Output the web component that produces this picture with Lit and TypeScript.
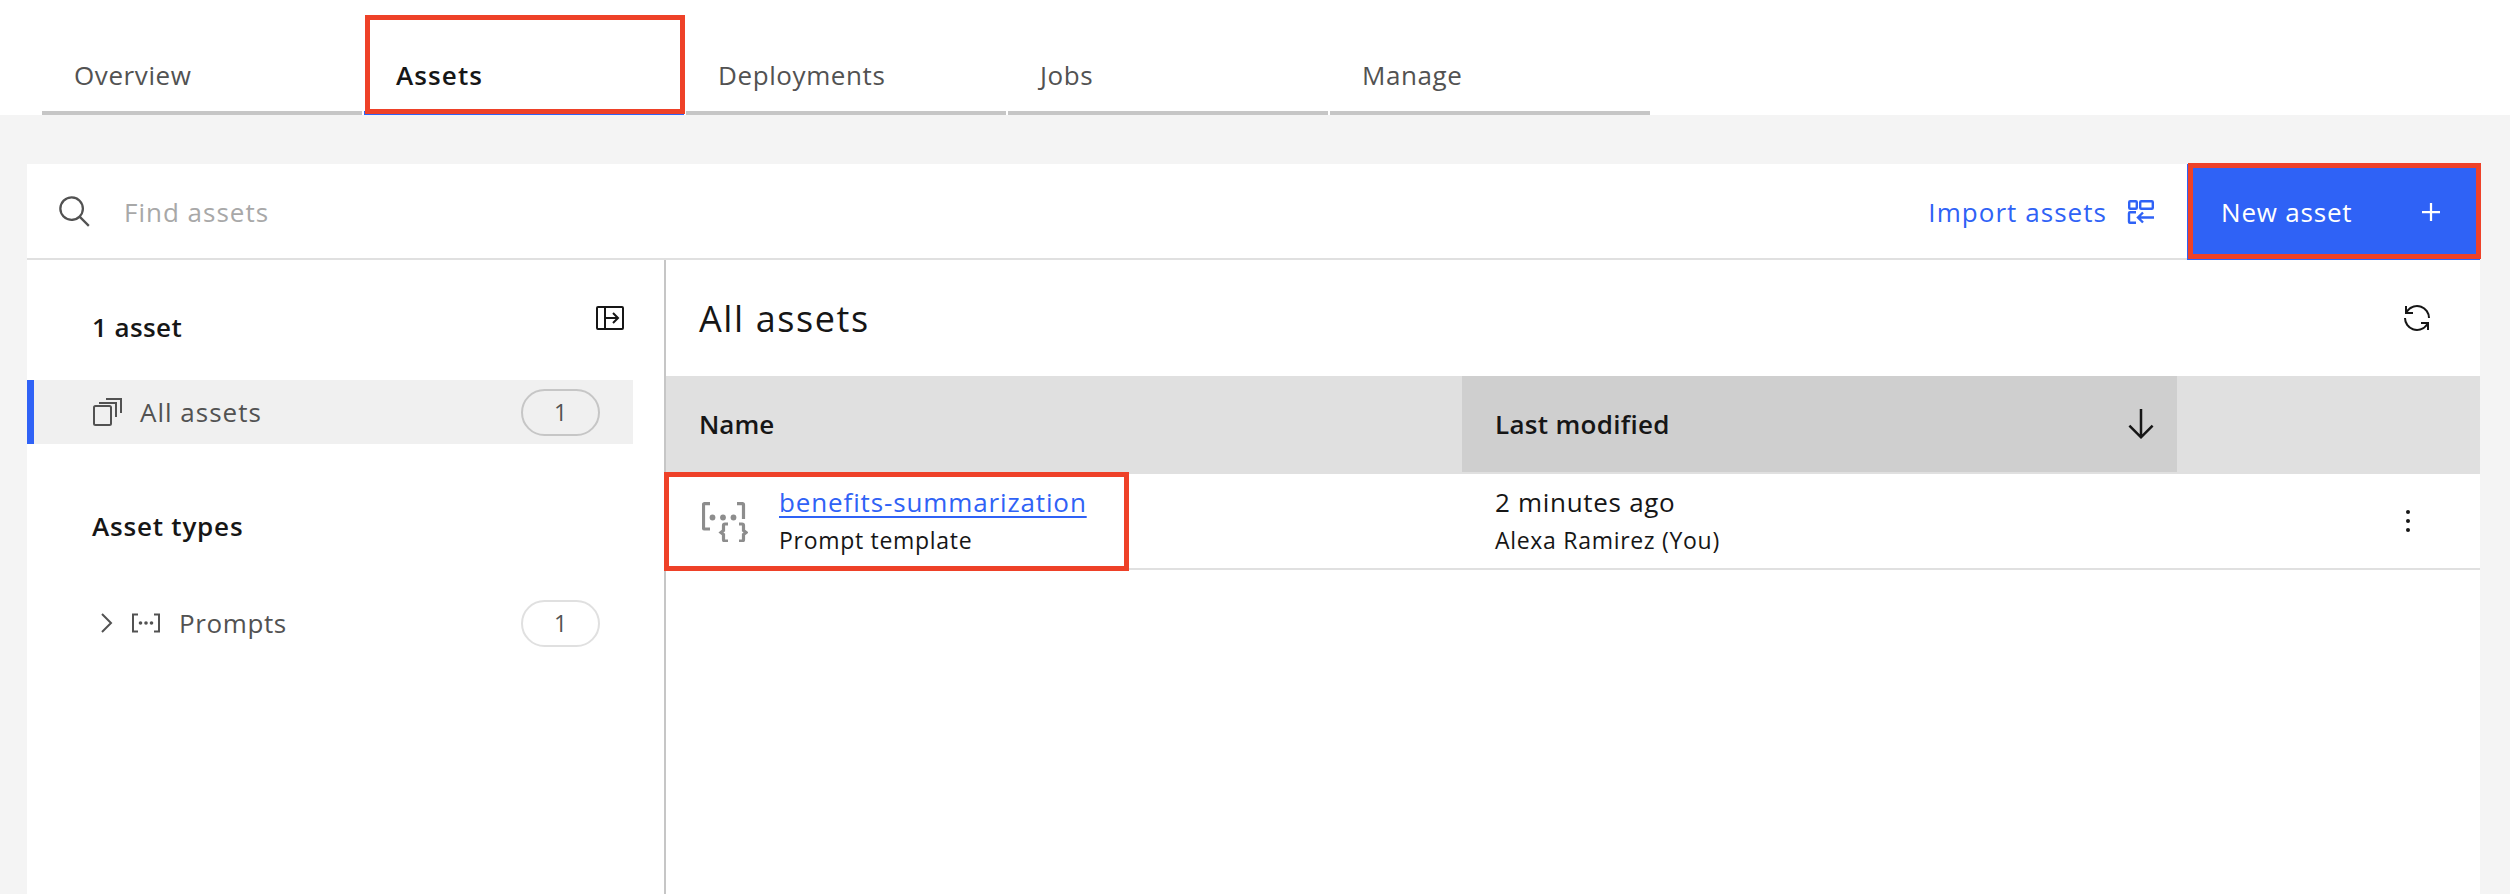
import { LitElement, html, css, svg } from "lit";
import { customElement, property } from "lit/decorators.js";

const icon = (size: number, body: unknown, box = "0 0 32 32") => html`
  <svg width=${size} height=${size} viewBox=${box} fill="currentColor">${body}</svg>
`;

const searchIcon = svg`<path d="M29 27.59l-7.55-7.55a11.02 11.02 0 1 0-1.41 1.41L27.59 29zM4 13a9 9 0 1 1 9 9 9.01 9.01 0 0 1-9-9z" />`;
const addIcon = svg`<path d="M17 15V8h-2v7H8v2h7v7h2v-7h7v-2z" />`;
const renewIcon = svg`<path d="M12 10H6.78A11 11 0 0 1 27 16h2A13 13 0 0 0 6 7.68V4H4v8h8zM20 22h5.22A11 11 0 0 1 5 16H3a13 13 0 0 0 23 8.32V28h2v-8h-8z" />`;
const arrowDown = svg`<path d="M24.59 16.59L17 24.17V4h-2v20.17l-7.59-7.58L6 18l10 10 10-10-1.41-1.41z" />`;
const overflowIcon = svg`<circle cx="16" cy="8" r="1.8" /><circle cx="16" cy="16" r="1.8" /><circle cx="16" cy="24" r="1.8" />`;

const importIcon = html`
  <svg width="28" height="24" viewBox="0 0 28 24" fill="none" stroke="currentColor" stroke-width="2.4">
    <rect x="2.2" y="1.2" width="7.6" height="7.6" rx="1" />
    <rect x="13.2" y="1.2" width="12.6" height="7.6" rx="1" />
    <path d="M9 12.2H3a1 1 0 0 0-1 1V21.8a1 1 0 0 0 1 1h6" />
    <path d="M27 17.5H11M16 12.5l-5 5 5 5" />
  </svg>
`;
const collapseIcon = html`
  <svg width="30" height="26" viewBox="0 0 30 26" fill="none" stroke="currentColor" stroke-width="2">
    <rect x="2" y="2" width="26" height="22" rx="1" />
    <path d="M10 2v22M10 13h13M18 8l5 5-5 5" />
  </svg>
`;
const stackIcon = html`
  <svg width="30" height="30" viewBox="0 0 30 30" fill="none" stroke="currentColor" stroke-width="2">
    <rect x="2" y="9" width="17" height="19" rx="1.5" />
    <path d="M7 6h17v14M14 2h15v14" />
  </svg>
`;
const chevronIcon = html`
  <svg width="16" height="20" viewBox="0 0 16 20" fill="none" stroke="currentColor" stroke-width="2">
    <path d="M3 1l9 9-9 9" />
  </svg>
`;
const promptsIcon = html`
  <svg width="30" height="20" viewBox="0 0 30 20" fill="none" stroke="currentColor" stroke-width="2">
    <path d="M7 1.5H2v17h5M23 1.5h5v17h-5" />
    <g fill="currentColor" stroke="none">
      <circle cx="9.5" cy="10" r="1.8" /><circle cx="15" cy="10" r="1.8" /><circle cx="20.5" cy="10" r="1.8" />
    </g>
  </svg>
`;
const templateIcon = html`
  <svg width="46" height="40" viewBox="0 0 46 40" fill="none" stroke="currentColor" stroke-width="3.2">
    <path d="M8 1.6H2.5a1 1 0 0 0-1 1V26a1 1 0 0 0 1 1H8M35 1.6h5.5a1 1 0 0 1 1 1V17" />
    <path d="M26 22h-3a1.5 1.5 0 0 0-1.5 1.5v5L19 30.5l2.5 2v5A1.5 1.5 0 0 0 23 39h3" />
    <path d="M37 22h3a1.5 1.5 0 0 1 1.5 1.5v5l2.5 2-2.5 2v5A1.5 1.5 0 0 1 40 39h-3" />
    <g fill="currentColor" stroke="none">
      <circle cx="10.5" cy="15.5" r="2.9" /><circle cx="21" cy="15.5" r="2.9" /><circle cx="31.5" cy="15.5" r="2.9" />
    </g>
  </svg>
`;

@customElement("count-tag")
export class CountTag extends LitElement {
  @property({ type: Boolean }) strong = false;

  static styles = css`
    .c-tag {
      display: flex;
      align-items: center;
      justify-content: center;
      box-sizing: border-box;
      width: 79px;
      height: 47px;
      border: 2px solid #e0e0e0;
      border-radius: 24px;
      font-size: 23px;
      color: #525252;
    }

    .c-tag--strong {
      border-color: #c6c6c6;
    }
  `;

  render() {
    return html`<div class="c-tag ${this.strong ? "c-tag--strong" : ""}">1</div>`;
  }
}

@customElement("app-root")
export class AppRoot extends LitElement {
  static styles = css`
    :host {
      display: block;
      height: 894px;
      overflow: hidden;
      background: #f4f4f4;
      font-family: "Open Sans", "Liberation Sans", sans-serif;
      color: #161616;
    }

    .c-tabs {
      display: flex;
      gap: 2px;
      height: 115px;
      padding-left: 42px;
      background: #fff;
    }

    .c-tabs__tab {
      position: relative;
      box-sizing: border-box;
      display: flex;
      align-items: center;
      width: 320px;
      padding: 39px 0 0 32px;
      border-bottom: 4px solid #c6c6c6;
      font-size: 26px;
      letter-spacing: 0.6px;
      color: #525252;
    }

    .c-tabs__tab--active {
      border-bottom-color: #2f62f6;
      font-weight: 600;
      letter-spacing: 1.1px;
      color: #161616;
    }

    .c-mark {
      position: absolute;
      box-sizing: border-box;
      border: 5px solid #ee4128;
      pointer-events: none;
    }

    .c-mark--tab {
      top: 15px;
      left: 1px;
      right: -1px;
      bottom: -3px;
    }

    .c-mark--button {
      top: -1px;
      left: 1px;
      right: -1px;
      bottom: 1px;
    }

    .c-mark--row {
      top: -2px;
      left: -2px;
      width: 465px;
      height: 99px;
    }

    .c-panel {
      margin: 49px 30px 0 27px;
      background: #fff;
      height: 730px;
    }

    .c-bar {
      display: flex;
      align-items: center;
      height: 96px;
      box-shadow: inset 0 -2px 0 #e0e0e0;
    }

    .c-bar__search {
      display: flex;
      align-items: center;
      gap: 31px;
      flex: 1;
      padding-left: 30px;
      font-size: 26px;
      letter-spacing: 1px;
      color: #a8a8a8;
    }

    .c-bar__search svg {
      color: #525252;
    }

    .c-bar__import {
      display: flex;
      align-items: center;
      gap: 20px;
      margin-right: 32px;
      font-size: 26px;
      letter-spacing: 1.05px;
      color: #2f62f6;
    }

    .c-bar__new {
      position: relative;
      box-sizing: border-box;
      display: flex;
      align-items: center;
      justify-content: space-between;
      width: 293px;
      height: 96px;
      padding: 0 31px 0 34px;
      background: #2f62f6;
      color: #fff;
      font-size: 26px;
      letter-spacing: 0.8px;
    }

    .c-body {
      display: flex;
      height: 634px;
    }

    .c-side {
      box-sizing: border-box;
      width: 639px;
      padding-top: 48px;
      border-right: 2px solid #c6c6c6;
    }

    .c-side__head {
      display: flex;
      justify-content: space-between;
      align-items: flex-start;
      height: 40px;
      padding: 0 39px 0 65px;
      font-size: 26px;
      line-height: 38px;
      font-weight: 600;
      letter-spacing: 0.4px;
    }

    .c-side__head svg {
      display: block;
      margin-top: -3px;
    }

    .c-side__title {
      height: 40px;
      margin-top: 63px;
      padding-left: 65px;
      font-size: 26px;
      line-height: 38px;
      font-weight: 600;
      letter-spacing: 0.8px;
    }

    .c-side__row {
      box-sizing: border-box;
      display: flex;
      align-items: center;
      width: 606px;
      height: 64px;
      padding-right: 33px;
      font-size: 26px;
      color: #525252;
    }

    .c-side__row count-tag {
      margin-left: auto;
      letter-spacing: 0;
    }

    .c-side__row--active {
      margin-top: 32px;
      padding-left: 58px;
      gap: 18px;
      letter-spacing: 1px;
      background: #f0f0f0;
      border-left: 7px solid #2f62f6;
    }

    .c-side__row--type {
      margin-top: 44px;
      padding-left: 72px;
      letter-spacing: 0.6px;
    }

    .c-side__row--type .c-side__glyph {
      margin: 0 18px 0 16px;
      display: flex;
    }

    .c-main {
      flex: 1;
    }

    .c-main__head {
      display: flex;
      align-items: center;
      justify-content: space-between;
      height: 116px;
      padding: 0 47px 0 33px;
      font-size: 36px;
      letter-spacing: 1.6px;
    }

    .c-table__head,
    .c-table__row {
      display: grid;
      grid-template-columns: 796px 715px 1fr;
    }

    .c-table__head {
      height: 98px;
      background: #e0e0e0;
      font-size: 26px;
      font-weight: 600;
    }

    .c-table__cell {
      display: flex;
      align-items: center;
      padding-left: 33px;
    }

    .c-table__head .c-table__cell {
      height: 96px;
    }

    .c-table__cell--sorted {
      justify-content: space-between;
      padding-right: 16px;
      background: #cfcfcf;
      letter-spacing: 0.3px;
    }

    .c-table__row {
      height: 96px;
      box-sizing: border-box;
      border-bottom: 2px solid #e0e0e0;
    }

    .c-table__name {
      position: relative;
      display: flex;
      align-items: center;
      gap: 31px;
      padding-left: 36px;
    }

    .c-table__glyph {
      display: flex;
      margin-top: 2px;
      color: #8d8d8d;
    }

    .c-table__text {
      display: flex;
      flex-direction: column;
      justify-content: center;
      gap: 6px;
    }

    .c-table__primary {
      font-size: 26px;
      line-height: 32px;
      letter-spacing: 0.7px;
    }

    .c-table__primary--link {
      color: #2f62f6;
      letter-spacing: 0.87px;
      text-decoration: underline;
      text-underline-offset: 4px;
    }

    .c-table__secondary {
      font-size: 23px;
      line-height: 32px;
      letter-spacing: 0.7px;
    }

    .c-table__actions {
      display: flex;
      align-items: center;
      justify-content: flex-end;
      padding-right: 54px;
    }
  `;

  render() {
    const tabs = ["Overview", "Assets", "Deployments", "Jobs", "Manage"];
    return html`
      <div class="c-tabs">
        ${tabs.map(
          (tab) => html`
            <div class="c-tabs__tab ${tab === "Assets" ? "c-tabs__tab--active" : ""}">
              ${tab}
              ${tab === "Assets" ? html`<div class="c-mark c-mark--tab"></div>` : ""}
            </div>
          `
        )}
      </div>

      <div class="c-panel">
        <div class="c-bar">
          <div class="c-bar__search">${icon(36, searchIcon)} Find assets</div>
          <div class="c-bar__import">Import assets ${importIcon}</div>
          <div class="c-bar__new">
            New asset ${icon(36, addIcon)}
            <div class="c-mark c-mark--button"></div>
          </div>
        </div>

        <div class="c-body">
          <div class="c-side">
            <div class="c-side__head">1 asset ${collapseIcon}</div>
            <div class="c-side__row c-side__row--active">
              ${stackIcon} All assets
              <count-tag strong></count-tag>
            </div>
            <div class="c-side__title">Asset types</div>
            <div class="c-side__row c-side__row--type">
              ${chevronIcon}
              <span class="c-side__glyph">${promptsIcon}</span>
              Prompts
              <count-tag></count-tag>
            </div>
          </div>

          <div class="c-main">
            <div class="c-main__head">All assets ${icon(32, renewIcon)}</div>
            <div class="c-table__head">
              <div class="c-table__cell">Name</div>
              <div class="c-table__cell c-table__cell--sorted">
                Last modified ${icon(40, arrowDown)}
              </div>
              <div></div>
            </div>
            <div class="c-table__row">
              <div class="c-table__name">
                <span class="c-table__glyph">${templateIcon}</span>
                <div class="c-table__text">
                  <span class="c-table__primary c-table__primary--link">benefits-summarization</span>
                  <span class="c-table__secondary">Prompt template</span>
                </div>
                <div class="c-mark c-mark--row"></div>
              </div>
              <div class="c-table__cell">
                <div class="c-table__text">
                  <span class="c-table__primary">2 minutes ago</span>
                  <span class="c-table__secondary">Alexa Ramirez (You)</span>
                </div>
              </div>
              <div class="c-table__actions">${icon(36, overflowIcon)}</div>
            </div>
          </div>
        </div>
      </div>
    `;
  }
}
